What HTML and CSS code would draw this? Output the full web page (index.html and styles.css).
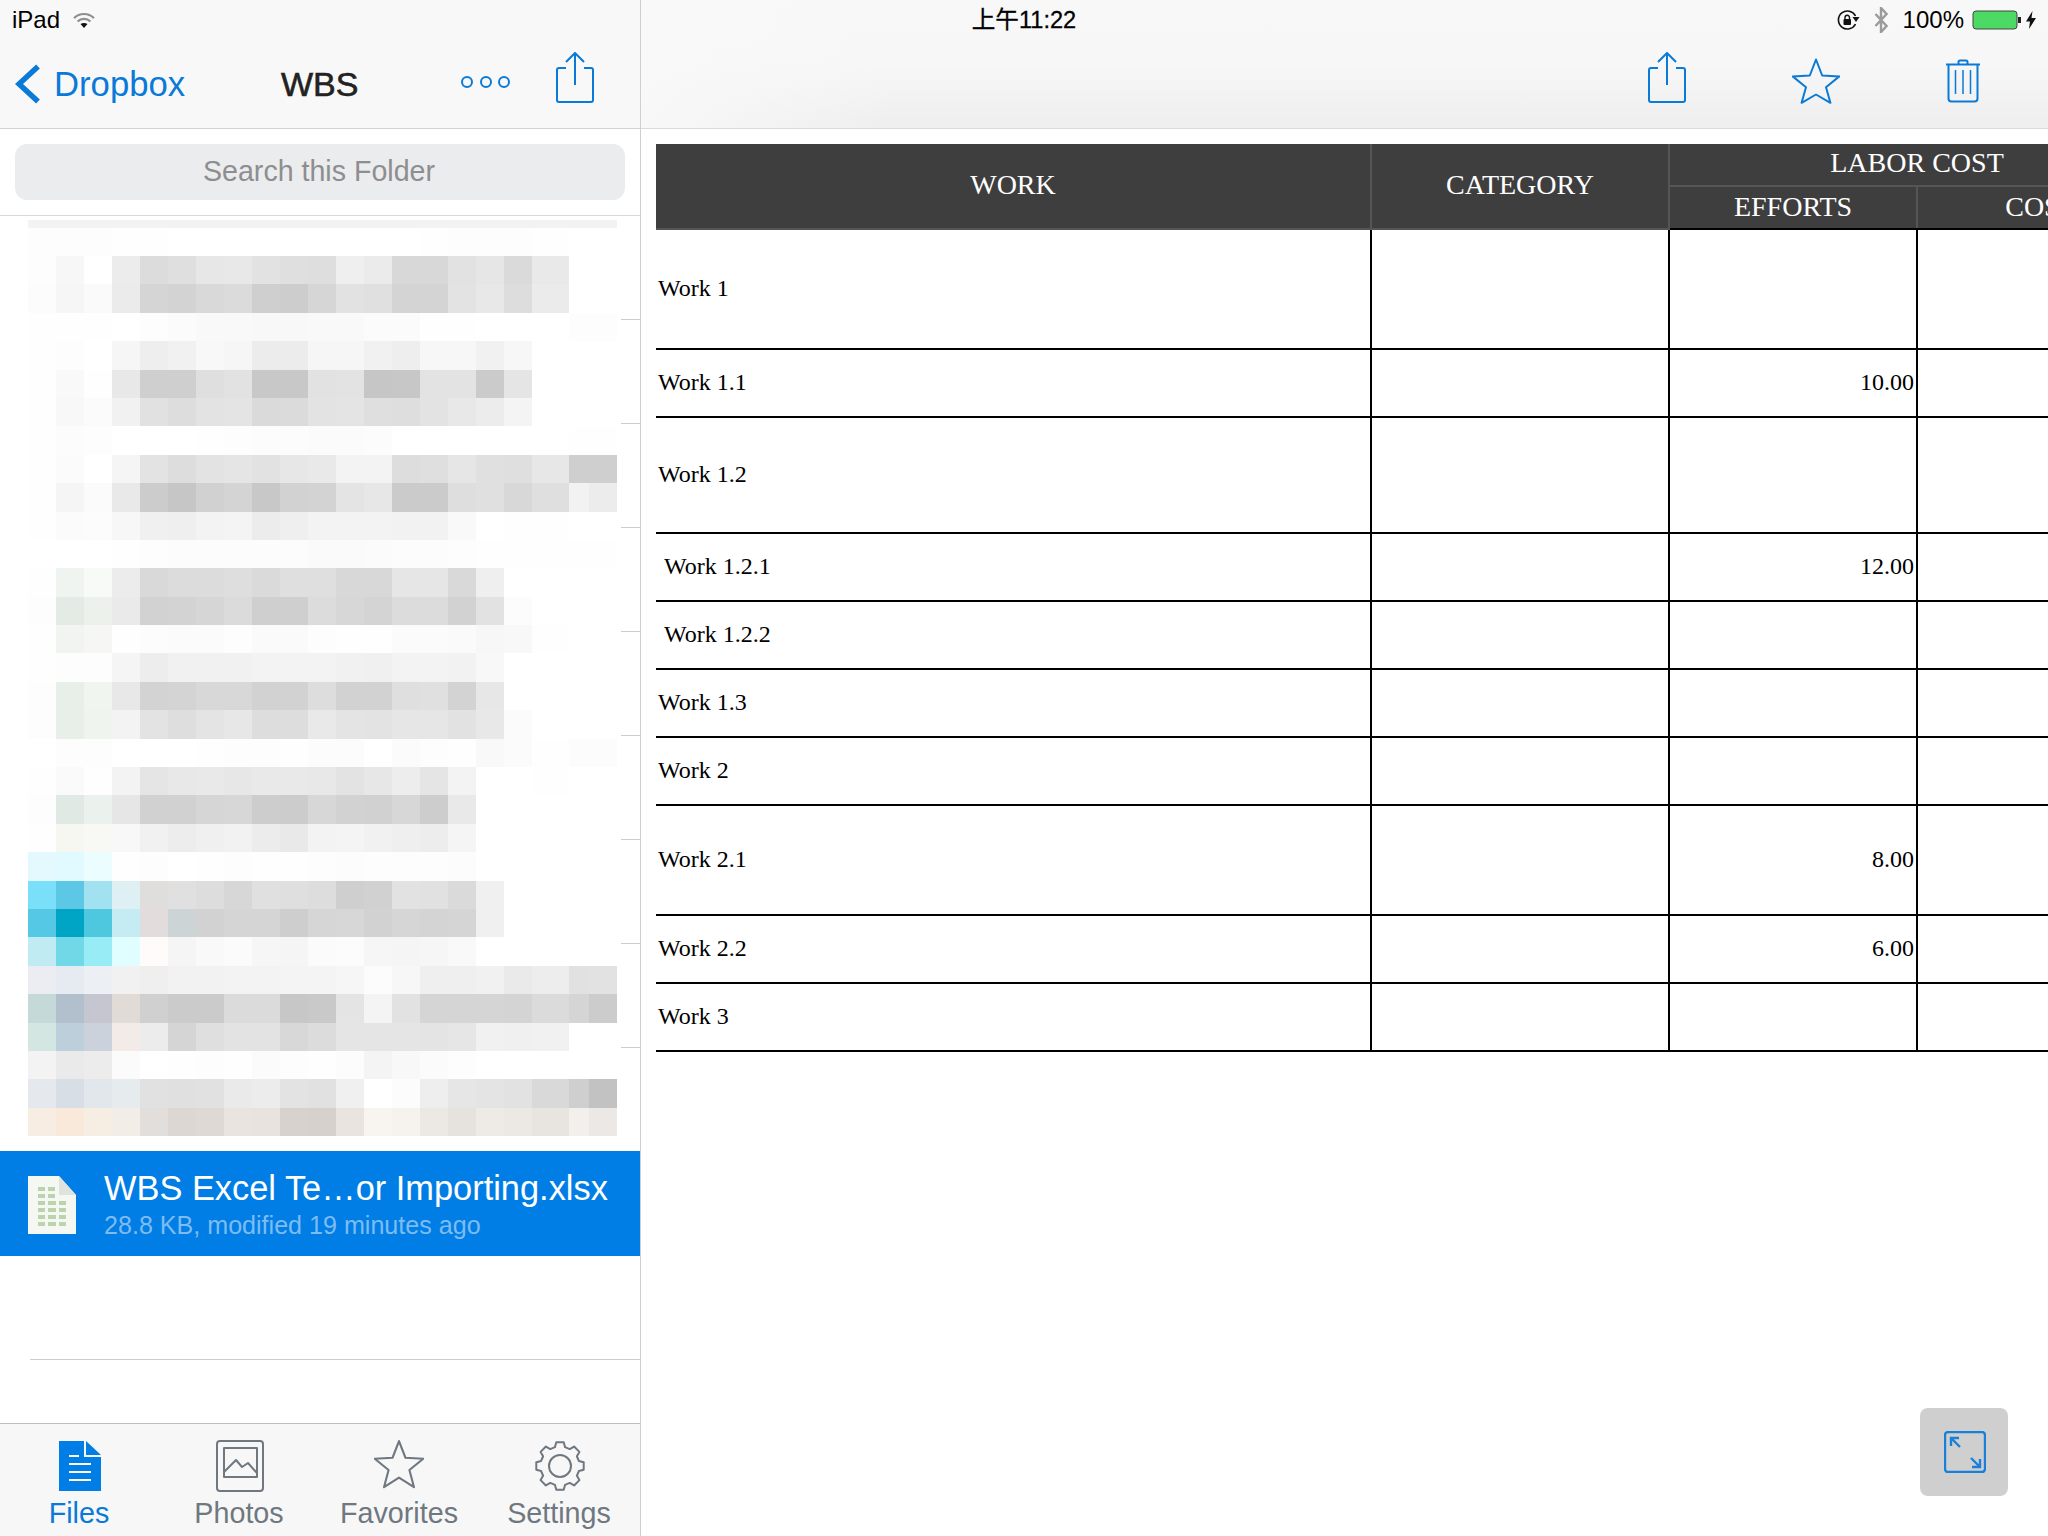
FILE: index.html
```html
<!DOCTYPE html>
<html lang="en">
<head>
<meta charset="utf-8">
<title>WBS - Dropbox</title>
<link rel="stylesheet" href="styles.css">
</head>
<body>
<div class="app">
  <div class="statusbar">
    <div class="status-left">
      <span>iPad</span>
      <svg class="wifi" width="22" height="18" viewBox="0 0 22 18"><path class="wifi-arc" d="M1.1 6.1A14 14 0 0 1 20.9 6.1"/><path class="wifi-arc" d="M4.6 9.6A9 9 0 0 1 17.4 9.6"/><path class="wifi-core" d="M7.5 12Q11 10 14.5 12L11 16Z"/></svg>
    </div>
    <div class="status-time">上午11:22</div>
    <div class="status-right">
      <svg width="23" height="20" viewBox="0 0 23 20"><path class="lock-ring" d="M18.5 6A9 9 0 1 0 18.5 14"/><path class="lock-fill" d="M15.5 7H22.5L19 12Z"/><rect class="lock-fill" x="6.5" y="9" width="7.5" height="6" rx="1"/><path class="lock-shackle" d="M8 9V7.5a2.2 2.2 0 0 1 4.5 0V9"/></svg>
      <svg class="bt" width="14" height="26" viewBox="0 0 14 26"><path d="M1.5 7L12.5 19L7 25V1L12.5 7L1.5 19"/></svg>
      <span class="battery-pct">100%</span>
      <svg class="battery" width="50" height="20" viewBox="0 0 50 20"><rect class="battery-body" x="1" y="1" width="44" height="18" rx="3"/><rect class="battery-cap" x="46" y="7" width="3" height="6"/></svg>
      <svg class="bolt" width="10" height="18" viewBox="0 0 10 18"><path d="M6.5 0L0 10.5H4L3 18L10 7H5.5Z"/></svg>
    </div>
  </div>

  <aside class="sidebar">
    <header class="nav">
      <svg class="chevron" width="26" height="40" viewBox="0 0 26 40"><path d="M23 2.5L4 20L23 37.5"/></svg>
      <span class="nav-back">Dropbox</span>
      <span class="nav-title">WBS</span>
      <svg class="more" width="52" height="14" viewBox="0 0 52 14"><circle cx="6" cy="7" r="5"/><circle cx="25" cy="7" r="5"/><circle cx="43" cy="7" r="5"/></svg>
      <svg class="icon-blue share-left" width="40" height="52" viewBox="0 0 40 52"><path d="M11 16H4a2 2 0 0 0-2 2V48a2 2 0 0 0 2 2H36a2 2 0 0 0 2-2V18a2 2 0 0 0-2-2H29"/><path d="M20 33V1M11 10L20 1L29 10"/></svg>
    </header>
    <div class="search"><div class="search-field">Search this Folder</div></div>
    <div class="list">
      <div class="mosaic-wrap"><div class="mosaic-strip"></div><div class="mosaic" id="mosaic"></div></div>
      <div class="row"><i class="rule"></i></div>
      <div class="row"><i class="rule"></i></div>
      <div class="row"><i class="rule"></i></div>
      <div class="row"><i class="rule"></i></div>
      <div class="row"><i class="rule"></i></div>
      <div class="row"><i class="rule"></i></div>
      <div class="row"><i class="rule"></i></div>
      <div class="row"><i class="rule"></i></div>
      <div class="row row-gap"></div>
      <div class="row-file">
        <svg class="file-icon" width="48" height="58" viewBox="0 0 48 58">
          <path class="page" d="M0 0H31L48 19V58H0Z"/><path class="page-fold" d="M31 0L48 19H31Z"/>
          <g class="grid-cells">
            <rect x="10" y="11" width="7" height="4"/><rect x="20" y="11" width="7" height="4"/>
            <rect x="10" y="18" width="7" height="4"/><rect x="20" y="18" width="7" height="4"/>
            <rect x="10" y="25" width="7" height="4"/><rect x="20" y="25" width="8" height="4"/><rect x="31" y="25" width="7" height="4"/>
            <rect x="10" y="32" width="7" height="4"/><rect x="20" y="32" width="8" height="4"/><rect x="31" y="32" width="7" height="4"/>
            <rect x="10" y="39" width="7" height="4"/><rect x="20" y="39" width="8" height="4"/><rect x="31" y="39" width="7" height="4"/>
            <rect x="10" y="46" width="7" height="4"/><rect x="20" y="46" width="8" height="4"/><rect x="31" y="46" width="7" height="4"/>
          </g>
        </svg>
        <div class="file-text">
          <div class="file-name">WBS Excel Te…or Importing.xlsx</div>
          <div class="file-meta">28.8 KB, modified 19 minutes ago</div>
        </div>
      </div>
      <div class="row-end"></div>
      <div class="list-fill"></div>
    </div>
    <nav class="tabbar">
      <div class="tab tab-active">
        <div class="tab-icon"><svg width="42" height="50" viewBox="0 0 42 50"><path class="files-fill" d="M0 0H25V16H42V50H0Z"/><path class="files-fill" d="M27 0L42 14H27Z"/><path class="files-lines" d="M10 15H20M10 23H32M10 31H32M10 39H32"/></svg></div>
        <span>Files</span>
      </div>
      <div class="tab">
        <div class="tab-icon"><svg class="tab-line" width="48" height="52" viewBox="0 0 48 52"><rect x="1" y="1" width="46" height="50" rx="3"/><rect x="8" y="8" width="33" height="29"/><path d="M8 32L20 20L26 27L32 23L41 33"/></svg></div>
        <span>Photos</span>
      </div>
      <div class="tab">
        <div class="tab-icon"><svg class="tab-line tab-star" width="50" height="50" viewBox="0 6 48 47"><path d="M24 7.5L30.2 23.5L47.3 24.4L34 35.2L38.4 51.8L24 42.5L9.6 51.8L14 35.2L.7 24.4L17.8 23.5Z"/></svg></div>
        <span>Favorites</span>
      </div>
      <div class="tab">
        <div class="tab-icon"><svg class="tab-line" width="50" height="50" viewBox="0 0 50 50"><path d="M19.95 6.16L21.25 1.3H28.75L30.05 6.16L34.75 8.11L39.11 5.58L44.42 10.89L41.89 15.25L43.84 19.95L48.7 21.25V28.75L43.84 30.05L41.89 34.75L44.42 39.11L39.11 44.42L34.75 41.89L30.05 43.84L28.75 48.7H21.25L19.95 43.84L15.25 41.89L10.89 44.42L5.58 39.11L8.11 34.75L6.16 30.05L1.3 28.75V21.25L6.16 19.95L8.11 15.25L5.58 10.89L10.89 5.58L15.25 8.11Z"/><circle cx="25" cy="25" r="11"/></svg></div>
        <span>Settings</span>
      </div>
    </nav>
  </aside>

  <main class="detail">
    <header class="toolbar">
      <svg class="icon-blue" width="40" height="52" viewBox="0 0 40 52"><path d="M11 16H4a2 2 0 0 0-2 2V48a2 2 0 0 0 2 2H36a2 2 0 0 0 2-2V18a2 2 0 0 0-2-2H29"/><path d="M20 33V1M11 10L20 1L29 10"/></svg>
      <svg class="icon-blue" width="48" height="52" viewBox="0 0 48 52"><path d="M24 7.5L30.2 23.5L47.3 24.4L34 35.2L38.4 50.8L24 42.5L9.6 50.8L14 35.2L.7 24.4L17.8 23.5Z"/></svg>
      <svg class="icon-blue" width="36" height="52" viewBox="0 0 36 52"><path d="M1 12.5H35M13.5 12V10a1.5 1.5 0 0 1 1.5-1.5H21a1.5 1.5 0 0 1 1.5 1.5V12"/><path d="M3.5 13V46.5a3 3 0 0 0 3 3H29.5a3 3 0 0 0 3-3V13"/><path class="thin" d="M10.5 18V42M18 18V42M25.5 18V42"/></svg>
    </header>
    <div class="sheet">
      <table class="wbs">
        <colgroup><col class="c-work"><col class="c-cat"><col class="c-eff"><col class="c-cost"></colgroup>
        <thead>
          <tr class="h-top"><th rowspan="2">WORK</th><th rowspan="2">CATEGORY</th><th colspan="2" class="th-group">LABOR COST</th></tr>
          <tr class="h-sub"><th class="to-body">EFFORTS</th><th class="to-body">COST</th></tr>
        </thead>
        <tbody>
          <tr class="r-120"><td>Work 1</td><td></td><td></td><td></td></tr>
          <tr class="r-68"><td>Work 1.1</td><td></td><td class="num">10.00</td><td></td></tr>
          <tr class="r-116"><td>Work 1.2</td><td></td><td></td><td></td></tr>
          <tr class="r-68"><td class="sub">Work 1.2.1</td><td></td><td class="num">12.00</td><td></td></tr>
          <tr class="r-68"><td class="sub">Work 1.2.2</td><td></td><td></td><td></td></tr>
          <tr class="r-68"><td>Work 1.3</td><td></td><td></td><td></td></tr>
          <tr class="r-68"><td>Work 2</td><td></td><td></td><td></td></tr>
          <tr class="r-110"><td>Work 2.1</td><td></td><td class="num">8.00</td><td></td></tr>
          <tr class="r-68"><td>Work 2.2</td><td></td><td class="num">6.00</td><td></td></tr>
          <tr class="r-68"><td>Work 3</td><td></td><td></td><td></td></tr>
        </tbody>
      </table>
    </div>
    <div class="expand">
      <svg width="42" height="42" viewBox="0 0 42 42"><rect x="1" y="1" width="40" height="40" rx="3"/><path d="M7 7L16 16M7 15V7H15M36 36L27 27M36 28V36H28"/></svg>
    </div>
  </main>
</div>
<script src="mosaic.js"></script>
</body>
</html>
```

FILE: styles.css
```css
* { box-sizing: border-box; }
html, body { margin: 0; padding: 0; }
body {
  width: 2048px;
  height: 1536px;
  overflow: hidden;
  background: #fff;
  font-family: "Liberation Sans", "Noto Sans CJK SC", sans-serif;
  color: #000;
}
.app { position: relative; display: flex; width: 2048px; height: 1536px; }

/* status bar lies over both panes */
.statusbar {
  position: absolute;
  z-index: 2;
  top: 0; left: 0; right: 0;
  height: 40px;
  padding: 0 12px;
  display: grid;
  grid-template-columns: 1fr auto 1fr;
  align-items: center;
  font-size: 24px;
  line-height: 40px;
}
.status-left { display: flex; align-items: center; gap: 13px; }
.status-right { display: flex; align-items: center; justify-content: flex-end; gap: 13px; }
.status-time { font-size: 23.6px; -webkit-text-stroke: .3px #000; }
.wifi { margin-top: 2px; }
.wifi-arc { fill: none; stroke: #8e8e8e; stroke-width: 2.2; }
.wifi-core { fill: #111; }
.lock-ring { fill: none; stroke: #111; stroke-width: 1.6; }
.lock-fill { fill: #111; }
.lock-shackle { fill: none; stroke: #111; stroke-width: 1.4; }
.bt { margin-left: 1px; margin-right: 1px; }
.bt path { fill: none; stroke: #9b9b9b; stroke-width: 2.4; }
.battery-pct { margin-left: 1px; margin-right: -5px; }
.battery-body { fill: #4cd964; stroke: #444; stroke-width: 1; }
.battery-cap { fill: #222; }
.bolt { margin-left: -9px; }
.bolt path { fill: #111; }

/* sidebar */
.sidebar {
  width: 641px;
  flex: none;
  display: flex;
  flex-direction: column;
  border-right: 1px solid #cfcfcf;
}
.nav {
  height: 129px;
  flex: none;
  display: flex;
  align-items: flex-start;
  background: #f8f8f8;
  border-bottom: 1px solid #d2d2d2;
  padding: 52px 0 0 15px;
}
.chevron { margin-top: 12px; flex: none; }
.chevron path { fill: none; stroke: #0a7ad8; stroke-width: 5.5; }
.nav-back {
  font-size: 34.7px;
  line-height: 40px;
  color: #0a7ad8;
  margin: 12px 0 0 13px;
  width: 227px;
  flex: none;
}
.nav-title {
  font-size: 34px;
  line-height: 40px;
  color: #222;
  margin-top: 12px;
  width: 180px;
  flex: none;
  -webkit-text-stroke: .6px #222;
}
.more { flex: none; margin-top: 23px; }
.more circle { fill: none; stroke: #0a7ad8; stroke-width: 2; }
.icon-blue { flex: none; }
.icon-blue path { fill: none; stroke: #0a7ad8; stroke-width: 2; stroke-linejoin: round; }
.icon-blue path.thin { stroke-width: 1.5; }
.share-left { margin-left: 42px; }

.search {
  height: 87px;
  flex: none;
  padding: 15px 15px 0;
  border-bottom: 1px solid #d8d8d8;
}
.search-field {
  height: 56px;
  border-radius: 12px;
  background: #ebecee;
  color: #8e8e90;
  font-size: 28.6px;
  line-height: 54px;
  padding-right: 2px;
  text-align: center;
}

.list { position: relative; flex: 1; display: flex; flex-direction: column; min-height: 0; }
.mosaic-wrap { position: absolute; top: 4px; left: 28px; width: 589px; }
.mosaic-strip { height: 7.6px; background: #f3f3f3; }
.mosaic {
  display: grid;
  grid-template-columns: repeat(18, 28px) 37px 20px 28px;
  grid-auto-rows: 28.4px;
}
.row { height: 104px; flex: none; display: flex; align-items: flex-end; justify-content: flex-end; }
.row-gap { height: 103px; }
.rule { display: block; width: 19px; height: 1px; background: #cdcdcd; position: relative; }
.row-file {
  height: 105px;
  flex: none;
  display: flex;
  align-items: flex-start;
  gap: 28px;
  background: #007ee5;
  padding: 25px 0 0 28px;
}
.file-icon { flex: none; }
.page { fill: #f5f7f3; }
.page-fold { fill: #dfe3dd; }
.grid-cells rect { fill: #bcd4ae; }
.file-text { margin-top: -10px; white-space: nowrap; }
.file-name { font-size: 34.4px; line-height: 44px; color: #fff; }
.file-meta { font-size: 25.1px; line-height: 30px; color: #7cbcf2; }
.row-end { height: 104px; flex: none; margin-left: 30px; border-bottom: 1px solid #cdcdcd; }
.list-fill { flex: 1; }

.tabbar {
  height: 113px;
  flex: none;
  display: grid;
  grid-template-columns: repeat(4, 1fr);
  background: #f7f7f7;
  border-top: 1px solid #bdbdbd;
}
.tab {
  display: flex;
  flex-direction: column;
  align-items: center;
  padding: 16px 2px 0 0;
  font-size: 28.7px;
  line-height: 32px;
  color: #6f7780;
}
.tab-icon { height: 52px; margin: 0 -2px 5px 0; display: flex; align-items: center; justify-content: center; }
.tab-active { color: #0a7ad8; }
.files-fill { fill: #007ee5; }
.files-lines { fill: none; stroke: #fff; stroke-width: 2; }
.tab-line * { fill: none; stroke: #6f7780; stroke-width: 2; stroke-linejoin: round; }
.tab-star { margin: -5px 2px 0 0; }

/* detail */
.detail { position: relative; flex: 1; min-width: 0; display: flex; flex-direction: column; overflow: hidden; }
.toolbar {
  height: 129px;
  flex: none;
  display: flex;
  align-items: flex-start;
  justify-content: flex-end;
  gap: 105px;
  padding: 52px 67px 0 0;
  background:
    linear-gradient(90deg, rgba(249, 249, 249, .9) 0%, rgba(249, 249, 249, 0) 18%),
    linear-gradient(180deg, #f8f8f8 0%, #f7f7f7 50%, #eeeeee 100%);
  border-bottom: 1px solid #dadada;
}
.sheet { flex: 1; padding: 15px 0 0 15px; min-height: 0; overflow: hidden; }
.wbs {
  border-collapse: collapse;
  table-layout: fixed;
  width: 1509px;
  font-family: "Liberation Serif", "Times New Roman", serif;
  font-size: 24px;
  color: #000;
}
.c-work { width: 715px; }
.c-cat { width: 298px; }
.c-eff { width: 248px; }
.c-cost { width: 248px; }
.wbs th {
  background: #3e3e3e;
  color: #fff;
  font-weight: normal;
  font-size: 28px;
  line-height: 32px;
  padding: 0 0 2px;
  border: 2px solid #555;
  border-top: 0;
  text-align: center;
}
.wbs th:first-child { border-left: 0; }
.wbs th.to-body { border-bottom-color: #000; }
.wbs th.th-group { padding-bottom: 4px; }
.h-top { height: 42px; }
.h-sub { height: 43px; }
.wbs td {
  padding: 0 2px 2px;
  border: 2px solid #000;
  vertical-align: middle;
}
.wbs td:first-child { border-left: 0; }
.wbs td.sub { padding-left: 8px; }
.wbs td.num { text-align: right; }
.r-68 { height: 68px; }
.r-110 { height: 110px; }
.r-116 { height: 116px; }
.r-120 { height: 120px; }

.expand {
  position: absolute;
  right: 40px;
  bottom: 40px;
  width: 88px;
  height: 88px;
  border-radius: 8px;
  background: #cfcfcf;
  display: flex;
  align-items: center;
  justify-content: center;
  padding-left: 2px;
}
.expand svg { fill: none; stroke: #1a7fd8; stroke-width: 2.4; }
```

FILE: mosaic.js
```js
var rows = [
"fd fd fd fe fe ff ff ff ff ff ff ff ff ff fe fd fd fd fe ff ff",
"fd f7 ff ec dc df e7 e8 e2 df de ef eb d8 d8 e2 e6 da e9 ff ff",
"fc f6 fa eb d5 d3 d9 db cf cd d6 e2 e0 d4 d4 e3 e8 dd eb ff ff",
"fe fe fe ff fd fb f9 f9 f8 f8 f9 f9 fb fb fe fe ff ff ff fd fd",
"fe fd ff f6 ee f1 f8 f6 ec ec f6 f6 f1 ee f7 f7 f1 f7 ff ff ff",
"fe f9 fe e8 cf cf df e2 c8 c8 e2 e3 c6 c7 e3 e3 cb e5 ff ff ff",
"fe f8 fb f1 e1 dd e3 e4 da db e3 e4 df de e3 e8 ec f4 ff ff ff",
"fe fc fd ff ff ff fe fd fc fc fb fb fc ff ff ff ff ff ff fe fe",
"fe fb ff f5 e3 dd e3 e5 e2 e7 e9 f3 f3 dd df e6 e0 df e7 cf cf",
"fe f5 fb e9 cc c6 d1 d4 c8 d2 d3 e4 e7 cb cb de e0 d8 df f2 ec",
"fe fb fc f7 f0 ef f3 f4 ec ef f3 f3 f3 f2 f2 f9 ff fe fe ff ff",
"ff ff ff fe fd fc fc fc fc fc fa fa fb fc fc fd fe fe fe fe fe",
"fe f0f4f0 f8faf8 ec d9 dc dc de da df df d8 d8 e6 e6 d9 ef ff ff ff ff",
"fd e4ebe4 ecf1ec ea d2 d3 d6 db cf cf dc d7 d4 dc dc d2 e2 fc ff ff ff",
"fe f2f4f2 f6f7f4 fe fc fb fb fd fa fa fd fe fe fb fb fa f7 f8 fe ff ff",
"fe fd fd f5 ed f1 f1 f1 f3 f3 f3 f1 f0 f3 f3 f2 f8 ff ff ff ff",
"fd e8eee8 f0f5f0 e8 d3 d4 d8 d8 d2 d2 dd d2 d2 df e0 d3 e7 ff ff ff ff",
"fd e8efe8 eff4ef f3 e3 de e4 e7 dd dd e9 e4 e3 e6 e6 e2 e8 fb ff ff ff",
"ff fd fd ff ff ff fe fd fd fe fc fc ff fb fd fe f9 fb fe fc fc",
"fe fa fe f3 e5 e8 e9 e7 e9 e9 e8 e3 e7 ed e5 f3 ff ff fe ff ff",
"fd e0e9e4 ebf1ed e6 d1 d1 d6 d7 cd cc d7 d2 d1 d7 cd e9 ff ff ff ff ff",
"fe f7f7f2 f8f8f4 f8 f1 ed f0 f2 ec e9 f3 f4 f1 ef ed f5 ff ff ff ff ff",
"e4f9fe e0faff ebfdff fe fd ff fe fd fe fe fd fc fd fd fd fc ff ff ff ff ff",
"7adff8 5cc8e6 a2e2f0 dff0f4 e0dedd e0 dd d7 e0 df dd cf d1 e2 e1 da f0 ff ff ff ff",
"55c8e5 00a5c5 4dc8df c5ecf2 e3dcdc cdd4d6 d2 d5 d5 ce d6 d7 d2 d6 d4 d5 f0 ff ff ff ff",
"c0ebf2 70d8e6 98ecf5 e0fdff fffbfb f5 f9 fb f6 f5 fb fc f6 f5 f6 f9 ff ff ff ff ff",
"ecedf2 e6ebf1 ecf0f4 f1 ef f2 f2 f3 f3 f4 f4 f6 fc f7 ef ef f1 ea ed e1 e2",
"c5d9d8 b1c0cc c6c6d0 e1dbd8 d0 cb cb db db c7 c9 e4 f4 e2 d5 d5 d5 d4 db d5 cc",
"d4e6e2 bccfda ccd2dc f2ebe8 ec d5 df e3 e3 d8 dc e5 e5 e5 e4 e6 f1 f0 f1 ff ff",
"f3 ea ec fb ff fe fd fe fb fd fe fc f4 f8 fb fd ff ff ff ff ff",
"e5e8ec d8dee5 e1e7ea e6ebee e1 e0 e1 ea ec e3 e1 f0 ff fc ee e6 e4 e2 d9 cf c2",
"f8ede2 f8e9db f6eee2 f3ede8 e2dedb dcd7d3 dfd9d5 eae4e0 e8e3df d7d2ce d6d1cd e9e4e0 f8f5f1 f6f2ee ece8e4 e6e2de eeeae6 ece8e4 e8e5e0 f3efec ebe8e5"
];
var host = document.getElementById("mosaic");
rows.forEach(function (row) {
  row.split(" ").forEach(function (token) {
    var cell = document.createElement("div");
    cell.style.background = "#" + (token.length === 2 ? token + token + token : token);
    host.appendChild(cell);
  });
});
```
